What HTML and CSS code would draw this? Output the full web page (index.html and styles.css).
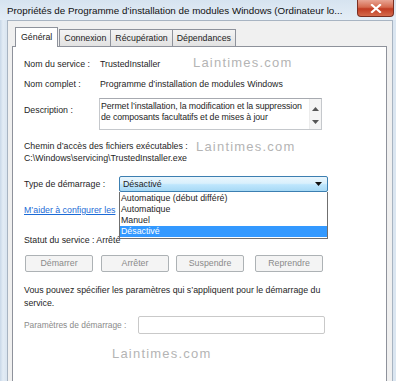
FILE: index.html
```html
<!DOCTYPE html>
<html lang="fr">
<head>
<meta charset="utf-8">
<link rel="stylesheet" href="styles.css">
</head>
<body>
<div class="frame">
  <div class="titlebar">
    <span class="title">Propriétés de Programme d’installation de modules Windows (Ordinateur lo...</span>
    <div class="close">
      <svg width="14" height="9" viewBox="0 0 14 9"><path d="M3 1 L11 8 M11 1 L3 8" stroke="#fff" stroke-width="2.2" stroke-linecap="square"/></svg>
    </div>
  </div>
  <div class="client">
    <div class="tabs">
      <div class="tab active">Général</div>
      <div class="tab">Connexion</div>
      <div class="tab">Récupération</div>
      <div class="tab">Dépendances</div>
    </div>
    <div class="panel">
      <div class="row r1"><span class="lbl">Nom du service :</span><span>TrustedInstaller</span></div>
      <div class="row r2"><span class="lbl">Nom complet :</span><span>Programme d’installation de modules Windows</span></div>
      <div class="row r3">
        <span class="lbl desc-lbl">Description :</span>
        <div class="textarea">
          <div class="ta-text">Permet l’installation, la modification et la suppression<br>de composants facultatifs et de mises à jour</div>
          <div class="scroll">
            <svg width="7" height="4" viewBox="0 0 7 4"><path d="M0 4 L3.5 0 L7 4Z" fill="#555"/></svg>
            <svg width="7" height="4" viewBox="0 0 7 4"><path d="M0 0 L3.5 4 L7 0Z" fill="#555"/></svg>
          </div>
        </div>
      </div>
      <div class="line l-path">Chemin d’accès des fichiers exécutables :</div>
      <div class="line l-exe">C:\Windows\servicing\TrustedInstaller.exe</div>
      <div class="row r-type">
        <span class="lbl type-lbl">Type de démarrage :</span>
        <div class="combo-wrap">
          <div class="combo"><span>Désactivé</span>
            <svg width="7" height="4" viewBox="0 0 7 4"><path d="M0 0 L3.5 4 L7 0Z" fill="#111"/></svg>
          </div>
          <ul class="dropdown">
            <li>Automatique (début différé)</li>
            <li>Automatique</li>
            <li>Manuel</li>
            <li class="sel">Désactivé</li>
          </ul>
        </div>
      </div>
      <div class="line l-link"><a class="link">M’aider à configurer les</a></div>
      <div class="line l-status">Statut du service : Arrêté</div>
      <div class="buttons">
        <div class="btn">Démarrer</div>
        <div class="btn">Arrêter</div>
        <div class="btn">Suspendre</div>
        <div class="btn">Reprendre</div>
      </div>
      <div class="para">Vous pouvez spécifier les paramètres qui s’appliquent pour le démarrage du service.</div>
      <div class="row r-params">
        <span class="lbl params-lbl">Paramètres de démarrage :</span>
        <div class="input"></div>
      </div>
    </div>
    <div class="wm wm1">Laintimes.com</div>
    <div class="wm wm2">Laintimes.com</div>
    <div class="wm wm3">Laintimes.com</div>
  </div>
</div>
</body>
</html>
```

FILE: styles.css
```css
html, body {
  margin: 0;
  padding: 0;
}
body {
  width: 396px;
  height: 381px;
  overflow: hidden;
  background: #dde7f1;
  font-family: "Liberation Sans", Arial, sans-serif;
  font-size: 8.8px;
  color: #1a1a1a;
}
.frame {
  height: 381px;
  background: linear-gradient(90deg, #c9d8e8 0, #e3ecf5 3px, #dbe6f1 6px);
  display: flex;
  flex-direction: column;
}
.titlebar {
  height: 20px;
  display: flex;
  align-items: flex-start;
  justify-content: space-between;
  padding-left: 7px;
  padding-right: 2px;
  background: linear-gradient(180deg, #d6e3f0, #e4edf6);
}
.title {
  font-size: 9.8px;
  line-height: 14px;
  padding-top: 4px;
  color: #111;
  white-space: nowrap;
}
.close {
  width: 37px;
  height: 17px;
  border-radius: 0 0 4px 4px;
  background: linear-gradient(180deg, #e8a493 0, #d56a4f 45%, #c13c23 55%, #d46a4c 100%);
  border: 1px solid #7a2f22;
  border-top: none;
  box-sizing: border-box;
  display: flex;
  align-items: center;
  justify-content: center;
}
.client {
  position: relative;
  flex: 1;
  margin-left: 7px;
  margin-right: 3px;
  background: #f0f0f0;
  border: 1px solid #a8b4c2;
  border-bottom: none;
  padding: 5px 5px 0 4px;
  display: flex;
  flex-direction: column;
}
.tabs {
  display: flex;
  align-items: flex-end;
  padding-left: 3px;
  height: 20px;
  position: relative;
  z-index: 2;
}
.tab {
  height: 17px;
  box-sizing: border-box;
  padding: 0 4px;
  border: 1px solid #8e929b;
  border-bottom: none;
  border-left: none;
  background: linear-gradient(180deg, #f4f4f4, #e2e2e2);
  line-height: 16px;
  color: #222;
}
.tab:nth-child(2) { border-left: 1px solid #8e929b; }
.tab.active {
  height: 20px;
  background: #fff;
  border-left: 1px solid #8e929b;
  margin-right: 1px;
  padding: 0 5px;
  line-height: 18px;
  margin-bottom: -1px;
}
.panel {
  flex: 1;
  background: #fff;
  border: 1px solid #8e929b;
  border-bottom: none;
  padding: 10px 0 0 11px;
  display: flex;
  flex-direction: column;
  color: #1e1e1e;
}
.row {
  display: flex;
  align-items: center;
  white-space: nowrap;
}
.lbl {
  flex: none;
}
.r1 { height: 14px; }
.r1 .lbl, .r2 .lbl, .r3 .lbl { width: 76px; }
.r2 { height: 14px; margin-top: 6px; }
.r3 { align-items: flex-start; margin-top: 7px; }
.desc-lbl { padding-top: 7px; }
.textarea {
  width: 223px;
  height: 32px;
  box-sizing: border-box;
  border: 1px solid #c5c8cc;
  border-top-color: #a7aab0;
  display: flex;
  margin-left: -1px;
}
.ta-text {
  flex: 1;
  white-space: nowrap;
  overflow: hidden;
  padding: 2px 1px;
  line-height: 11px;
  letter-spacing: -0.1px;
}
.scroll {
  width: 11px;
  background: #f4f4f4;
  border-left: 1px solid #ececec;
  display: flex;
  flex-direction: column;
  justify-content: space-between;
  align-items: center;
  padding: 8px 0 5px;
}
.line {
  height: 13px;
  line-height: 13px;
  white-space: nowrap;
}
.l-path { margin-top: 10px; }
.l-exe { margin-top: -1px; }
.r-type { margin-top: 11px; align-items: flex-start; position: relative; z-index: 3; height: 16px; }
.type-lbl { width: 95px; line-height: 16px; }
.combo-wrap { position: relative; }
.combo {
  width: 209px;
  height: 16px;
  box-sizing: border-box;
  border: 1px solid #3c7fb1;
  border-radius: 2px;
  background: linear-gradient(180deg, #eaf6fd 0, #d9f0fc 45%, #bee6fd 55%, #a7d9f5 100%);
  display: flex;
  align-items: center;
  justify-content: space-between;
  padding: 0 5px 0 3px;
  line-height: 14px;
}
.dropdown {
  position: absolute;
  left: 0;
  top: 16px;
  margin: 0;
  padding: 0;
  list-style: none;
  width: 209px;
  box-sizing: border-box;
  background: #fff;
  border: 1px solid #6f6f6f;
  border-top: none;
  padding-top: 1px;
}
.dropdown li {
  height: 11px;
  line-height: 11px;
  padding-left: 1px;
}
.dropdown li.sel {
  background: #3399ff;
  color: #fff;
  margin-bottom: 1px;
}
.l-link { margin-top: 12px; overflow: hidden; width: 94px; }
.link {
  color: #1c6bd6;
  text-decoration: underline;
}
.l-status { margin-top: 17px; }
.buttons {
  display: flex;
  gap: 8px;
  margin-top: 8px;
  margin-left: 1px;
}
.btn {
  width: 68px;
  height: 17px;
  box-sizing: border-box;
  border: 1px solid #adb2b5;
  border-radius: 2px;
  background: #f4f4f4;
  color: #8a8a8a;
  text-align: center;
  line-height: 15px;
}
.btn:nth-child(3) { margin-left: -1px; }
.btn:nth-child(4) { margin-left: 3px; }
.para {
  margin-top: 12px;
  width: 315px;
  line-height: 13px;
}
.r-params { margin-top: 5px; height: 19px; }
.params-lbl { width: 114px; color: #8a8a8a; font-size: 8.4px; }
.input {
  width: 187px;
  height: 18px;
  box-sizing: border-box;
  border: 1px solid #c9c9c9;
  border-radius: 2px;
}
.wm {
  position: absolute;
  font-family: "Liberation Sans", Arial, sans-serif;
  font-size: 13px;
  letter-spacing: 1.2px;
  color: #b4b4b4;
  pointer-events: none;
}
.wm1 { left: 185px; top: 34px; }
.wm2 { left: 188px; top: 118px; }
.wm3 { left: 104px; top: 325px; }
```
